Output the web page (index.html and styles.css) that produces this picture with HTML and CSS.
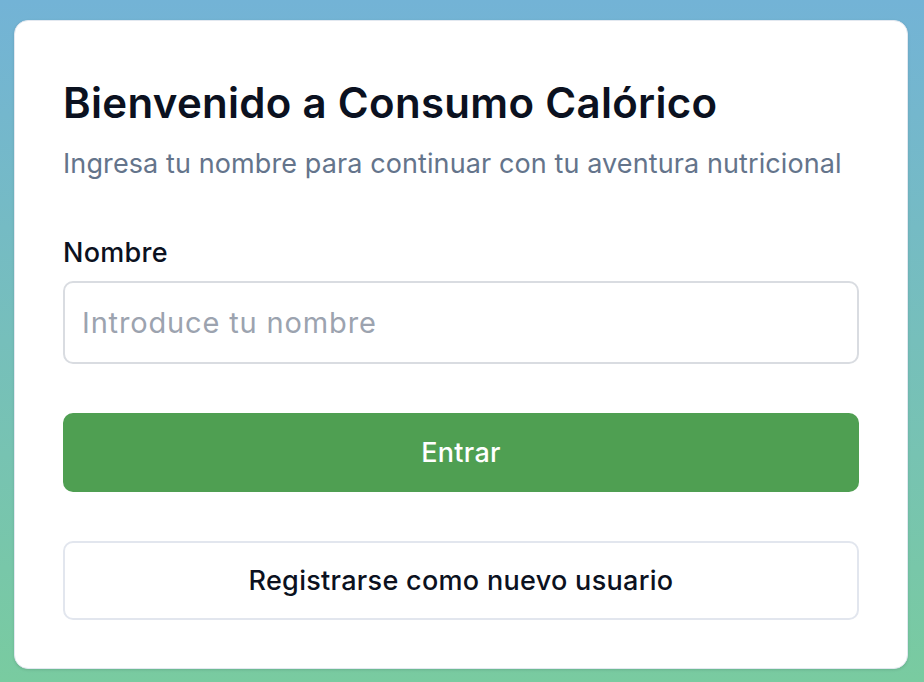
FILE: index.html
```html
<!DOCTYPE html>
<html lang="es">
<head>
<meta charset="utf-8">
<title>Consumo Calórico</title>
<link rel="stylesheet" href="styles.css">
</head>
<body>
<main class="page">
  <section class="card">
    <h1 class="title">Bienvenido a Consumo Calórico</h1>
    <p class="subtitle">Ingresa tu nombre para continuar con tu aventura nutricional</p>
    <form class="form">
      <label class="label" for="nombre">Nombre</label>
      <input class="input" id="nombre" type="text" placeholder="Introduce tu nombre">
      <button class="btn btn-primary" type="button">Entrar</button>
      <button class="btn btn-outline" type="button">Registrarse como nuevo usuario</button>
    </form>
  </section>
</main>
</body>
</html>
```

FILE: styles.css
```css
html, body {
  margin: 0;
  padding: 0;
  height: 100%;
}
body {
  font-family: Inter, "Noto Sans", sans-serif;
  background: linear-gradient(180deg, #73b3d6 0%, #79cba0 100%);
  overflow: hidden;
}
.page {
  padding: 20px 16px 0 14px;
}
.card {
  box-sizing: border-box;
  height: 649px;
  background: #ffffff;
  border: 1px solid #e2e8f0;
  border-radius: 14px;
  box-shadow: 0 1px 3px rgba(0,0,0,0.12);
  padding: 58px 48px 47px;
}
.title {
  margin: 0;
  font-size: 42px;
  line-height: 48px;
  font-weight: 600;
  color: #0b1120;
  letter-spacing: 0.3px;
}
.subtitle {
  margin: 19px 0 0;
  font-size: 27px;
  line-height: 36px;
  letter-spacing: 0.1px;
  color: #64748b;
}
.form {
  display: flex;
  flex-direction: column;
  margin-top: 53px;
}
.label {
  font-size: 27px;
  line-height: 36px;
  font-weight: 500;
  letter-spacing: 0.3px;
  color: #0b1120;
}
.input {
  box-sizing: border-box;
  margin-top: 10px;
  height: 83px;
  border: 2px solid #d9dce1;
  border-radius: 10px;
  padding: 0 17px;
  font-family: inherit;
  font-size: 29px;
  letter-spacing: 0.85px;
  color: #0b1120;
  background: #fff;
  outline: none;
}
.input::placeholder {
  color: #9ca3af;
}
.btn {
  box-sizing: border-box;
  height: 79px;
  border-radius: 10px;
  font-family: inherit;
  font-size: 27px;
  font-weight: 500;
  letter-spacing: 0.3px;
  cursor: pointer;
}
.btn-primary {
  margin-top: 49px;
  background: #4f9f52;
  color: #ffffff;
  border: none;
}
.btn-outline {
  margin-top: 49px;
  background: #ffffff;
  color: #0b1120;
  border: 2px solid #e2e6ee;
}
```
